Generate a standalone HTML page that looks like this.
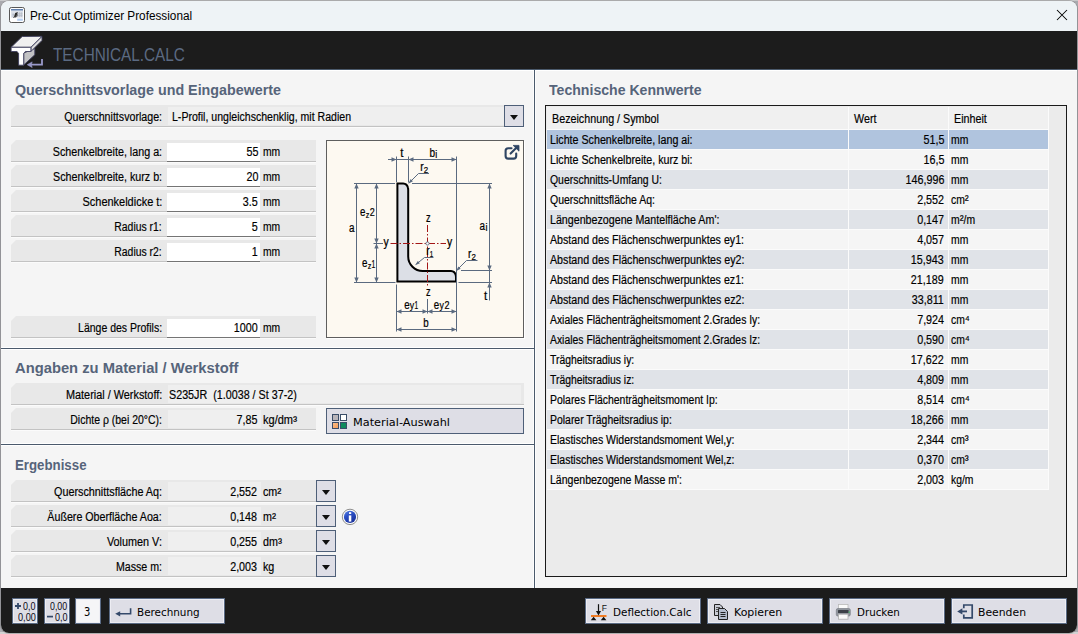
<!DOCTYPE html>
<html lang="de"><head><meta charset="utf-8"><title>Pre-Cut Optimizer Professional</title>
<style>
html,body{margin:0;padding:0}
body{width:1078px;height:634px;position:relative;overflow:hidden;background:#e9e9e9;font-family:"Liberation Sans",sans-serif;}
#bg{position:absolute;left:0;top:0;width:1078px;height:634px;background:linear-gradient(#c9c9cb 0,#c9c9cb 1px,#aaaaaf 1px,#aaaaaf 632px,#d2d2d2 632px);}
#win{position:absolute;left:1px;top:1px;width:1076px;height:632px;border-radius:8px;overflow:hidden;background:#f5f5f5;box-shadow:0 0 0 1px rgba(90,90,90,0.28);}
#titlebar{position:absolute;left:0;top:0;width:1076px;height:30px;background:#eef3f6;}
#band{position:absolute;left:0;top:30px;width:1076px;height:38px;background:#1c1c1c;}
#content{position:absolute;left:0;top:68px;width:1076px;height:519px;background:#f5f5f5;}
#bottom{position:absolute;left:0;top:587px;width:1076px;height:45px;background:#1c1c1c;}
.t,.ti,.tc,.h,.b{position:absolute;white-space:pre;line-height:14px;font-size:12px;color:#000;}
.t{-webkit-text-stroke:0.18px #000;}
.ti{color:#000;line-height:16px}
.tc{font-size:17.5px;line-height:20px;color:#5b6a82;}
.h{font-size:14.5px;font-weight:bold;line-height:18px;color:#56647a;}
.b{font-family:"DejaVu Sans","Liberation Sans",sans-serif;font-size:11px;line-height:14px;color:#000;}
.su{font-size:13.5px;position:relative;top:0.5px;line-height:0;}
.row{position:absolute;height:21px;background:#e8e8e8;clip-path:polygon(5px 0,100% 0,100% 100%,0 100%,0 5px);}
.dd{position:absolute;border:1px solid #4e5f78;background:#dedee6;}
.dd i{position:absolute;left:50%;top:50%;margin-left:-4.3px;margin-top:-1.2px;border-left:4.8px solid transparent;border-right:4.8px solid transparent;border-top:5.2px solid #111;width:0;height:0;}
.btn{position:absolute;border:1px solid #4e5f78;background:#dedee6;}
.bb{position:absolute;border:1px solid #5a6a84;background:#dedee6;box-shadow:inset 0 0 0 1px #ededf3;}
.d{position:absolute;white-space:pre;font-size:10.5px;line-height:12px;color:#0a0a14;}
#tbl{position:absolute;left:545px;top:105px;width:520px;height:470px;border:1px solid #1a1a1a;background:#ebebeb;}
</style></head>
<body>
<div id="bg"></div>
<div id="win">
<div id="titlebar"></div>
<div id="band"></div>
<div id="content"></div>
<div id="bottom"></div>
</div>
<svg style="position:absolute;left:9px;top:7px" width="16" height="16" viewBox="0 0 16 16">
<rect x="0.5" y="0.5" width="15" height="15" rx="1.8" fill="#ffffff" stroke="#585858"/>
<rect x="2" y="2" width="12" height="1.7" fill="#5f7fae"/>
<rect x="2" y="3.7" width="12" height="7" fill="#dde2ea"/>
<path d="M8.6 5.2V10M10.6 5.2V10M12.4 5.2V10M8 6.8H13.6M8 8.6H13.6" stroke="#b4bac6" stroke-width="0.7" fill="none"/>
<path d="M3.4 7.2H5.2M3.4 9H5" stroke="#9aa2b2" stroke-width="0.8"/>
<path d="M5 9.8L6.2 6L8.8 5L7 10.4Z" fill="#2a2a2a"/>
<path d="M4.2 10.6L7.8 9.2L8.6 7.4" stroke="#444" stroke-width="0.8" fill="none"/>
<rect x="8.2" y="11.6" width="5.6" height="2.2" fill="#a8c6ee" opacity="0.85"/>
</svg>
<span class="ti" style="top:8px;left:30px;transform-origin:0 0;transform:scaleX(0.98);">Pre-Cut Optimizer Professional</span>
<svg style="position:absolute;left:1056px;top:9px" width="12" height="12" viewBox="0 0 12 12"><path d="M1 1 L11 11 M11 1 L1 11" stroke="#000" stroke-width="1.05" fill="none"/></svg>
<svg style="position:absolute;left:6px;top:32px" width="44" height="38" viewBox="6 32 44 38">
<g stroke="#3d3d5c" stroke-width="0.9" stroke-linejoin="round">
<path d="M23.7 53L34.8 48.5V54.8L23.7 65Z" fill="#c2c2c4"/>
<path d="M30.9 47.3L42 36.3V40.4L30.9 51.5Z" fill="#dcdcdc"/>
<path d="M11.1 47.3L22.2 36.5L42 36.3L30.9 47.3Z" fill="#f0f0f0"/>
<path d="M11.1 47.3H30.9V51.5H25.4L23.7 53.2V65.2H18.6V53.2L16.9 51.5H11.1Z" fill="#ffffff"/>
</g>
<path d="M42 59V64.7H31" stroke="#9a9aca" stroke-width="1.8" fill="none"/>
<path d="M27.2 64.7L32.2 61.9L31.2 64.7L32.2 67.5Z" fill="#9a9aca" stroke="#9a9aca" stroke-width="0.6" stroke-linejoin="round"/>
</svg>
<span class="tc" style="top:45px;left:53px;transform-origin:0 0;transform:scaleX(0.875);">TECHNICAL.CALC</span>
<div style="position:absolute;left:1px;top:69px;width:1076px;height:1px;background:#4b5a6c;"></div>
<div style="position:absolute;left:1px;top:70px;width:1076px;height:1px;background:#ffffff;"></div>
<div style="position:absolute;left:533px;top:71px;width:1px;height:517px;background:#fdfdfd;"></div>
<div style="position:absolute;left:534px;top:70px;width:1px;height:518px;background:#4b5a6c;"></div>
<div style="position:absolute;left:535px;top:71px;width:1px;height:517px;background:#fdfdfd;"></div>
<div style="position:absolute;left:1px;top:347px;width:533px;height:1px;background:#ffffff;"></div>
<div style="position:absolute;left:1px;top:348px;width:534px;height:1px;background:#4b5a6c;"></div>
<div style="position:absolute;left:1px;top:349px;width:533px;height:1px;background:#ffffff;"></div>
<div style="position:absolute;left:1px;top:443px;width:533px;height:1px;background:#ffffff;"></div>
<div style="position:absolute;left:1px;top:444px;width:534px;height:1px;background:#4b5a6c;"></div>
<div style="position:absolute;left:1px;top:445px;width:533px;height:1px;background:#ffffff;"></div>
<span class="h" style="top:81.4px;left:15px;transform-origin:0 0;transform:scaleX(0.9855);">Querschnittsvorlage und Eingabewerte</span>
<div class="row" style="left:11px;top:105px;width:513px;"></div>
<div style="position:absolute;left:11px;top:126px;width:513px;height:1px;background:#c3c3c3;"></div>
<div style="position:absolute;left:11px;top:127px;width:513px;height:1px;background:#fbfbfb;"></div>
<span class="t" style="top:110.4px;right:915.9px;transform-origin:100% 0;transform:scaleX(0.8881);">Querschnittsvorlage:</span>
<div style="position:absolute;left:168px;top:107px;width:336px;height:18px;background:#efefef;"></div>
<span class="t" style="top:110px;left:172px;transform-origin:0 0;transform:scaleX(0.8799);">L-Profil, ungleichschenklig, mit Radien</span>
<div class="dd" style="left:504px;top:105px;width:18px;height:20px;"><i></i></div>
<div class="row" style="left:11px;top:140px;width:305px;"></div>
<div style="position:absolute;left:11px;top:161px;width:305px;height:1px;background:#c3c3c3;"></div>
<div style="position:absolute;left:11px;top:162px;width:305px;height:1px;background:#fbfbfb;"></div>
<span class="t" style="top:145.4px;right:915.9px;transform-origin:100% 0;transform:scaleX(0.8948);">Schenkelbreite, lang a:</span>
<div style="position:absolute;left:167px;top:143px;width:93px;height:18px;background:#ffffff;"></div>
<div style="position:absolute;left:167px;top:161px;width:93px;height:1px;background:#747474;"></div>
<span class="t" style="top:145.4px;right:820px;transform-origin:100% 0;transform:scaleX(0.895);">55</span>
<span class="t" style="top:145.4px;left:263px;transform-origin:0 0;transform:scaleX(0.86);">mm</span>
<div class="row" style="left:11px;top:165px;width:305px;"></div>
<div style="position:absolute;left:11px;top:186px;width:305px;height:1px;background:#c3c3c3;"></div>
<div style="position:absolute;left:11px;top:187px;width:305px;height:1px;background:#fbfbfb;"></div>
<span class="t" style="top:170.4px;right:915.9px;transform-origin:100% 0;transform:scaleX(0.8930);">Schenkelbreite, kurz b:</span>
<div style="position:absolute;left:167px;top:168px;width:93px;height:18px;background:#ffffff;"></div>
<div style="position:absolute;left:167px;top:186px;width:93px;height:1px;background:#747474;"></div>
<span class="t" style="top:170.4px;right:820px;transform-origin:100% 0;transform:scaleX(0.895);">20</span>
<span class="t" style="top:170.4px;left:263px;transform-origin:0 0;transform:scaleX(0.86);">mm</span>
<div class="row" style="left:11px;top:190px;width:305px;"></div>
<div style="position:absolute;left:11px;top:211px;width:305px;height:1px;background:#c3c3c3;"></div>
<div style="position:absolute;left:11px;top:212px;width:305px;height:1px;background:#fbfbfb;"></div>
<span class="t" style="top:195.4px;right:915.9px;transform-origin:100% 0;transform:scaleX(0.9143);">Schenkeldicke t:</span>
<div style="position:absolute;left:167px;top:193px;width:93px;height:18px;background:#ffffff;"></div>
<div style="position:absolute;left:167px;top:211px;width:93px;height:1px;background:#747474;"></div>
<span class="t" style="top:195.4px;right:820px;transform-origin:100% 0;transform:scaleX(0.895);">3.5</span>
<span class="t" style="top:195.4px;left:263px;transform-origin:0 0;transform:scaleX(0.86);">mm</span>
<div class="row" style="left:11px;top:215px;width:305px;"></div>
<div style="position:absolute;left:11px;top:236px;width:305px;height:1px;background:#c3c3c3;"></div>
<div style="position:absolute;left:11px;top:237px;width:305px;height:1px;background:#fbfbfb;"></div>
<span class="t" style="top:220.4px;right:915.9px;transform-origin:100% 0;transform:scaleX(0.8665);">Radius r1:</span>
<div style="position:absolute;left:167px;top:218px;width:93px;height:18px;background:#ffffff;"></div>
<div style="position:absolute;left:167px;top:236px;width:93px;height:1px;background:#747474;"></div>
<span class="t" style="top:220.4px;right:820px;transform-origin:100% 0;transform:scaleX(0.895);">5</span>
<span class="t" style="top:220.4px;left:263px;transform-origin:0 0;transform:scaleX(0.86);">mm</span>
<div class="row" style="left:11px;top:240px;width:305px;"></div>
<div style="position:absolute;left:11px;top:261px;width:305px;height:1px;background:#c3c3c3;"></div>
<div style="position:absolute;left:11px;top:262px;width:305px;height:1px;background:#fbfbfb;"></div>
<span class="t" style="top:245.4px;right:915.9px;transform-origin:100% 0;transform:scaleX(0.8665);">Radius r2:</span>
<div style="position:absolute;left:167px;top:243px;width:93px;height:18px;background:#ffffff;"></div>
<div style="position:absolute;left:167px;top:261px;width:93px;height:1px;background:#747474;"></div>
<span class="t" style="top:245.4px;right:820px;transform-origin:100% 0;transform:scaleX(0.895);">1</span>
<span class="t" style="top:245.4px;left:263px;transform-origin:0 0;transform:scaleX(0.86);">mm</span>
<div class="row" style="left:11px;top:316px;width:305px;"></div>
<div style="position:absolute;left:11px;top:337px;width:305px;height:1px;background:#c3c3c3;"></div>
<div style="position:absolute;left:11px;top:338px;width:305px;height:1px;background:#fbfbfb;"></div>
<span class="t" style="top:321.4px;right:915.9px;transform-origin:100% 0;transform:scaleX(0.8744);">Länge des Profils:</span>
<div style="position:absolute;left:167px;top:319px;width:93px;height:18px;background:#ffffff;"></div>
<div style="position:absolute;left:167px;top:337px;width:93px;height:1px;background:#747474;"></div>
<span class="t" style="top:321.4px;right:820px;transform-origin:100% 0;transform:scaleX(0.895);">1000</span>
<span class="t" style="top:321.4px;left:263px;transform-origin:0 0;transform:scaleX(0.86);">mm</span>
<svg id="dg" style="position:absolute;left:326px;top:140px" width="199" height="199" viewBox="326 140 199 199">
<rect x="326.5" y="140.5" width="197" height="197" fill="#fdf9f1" stroke="#5e5e5e" stroke-width="1"/>
<path d="M524.5 141V338.5M327 338.5H525" stroke="#ffffff" stroke-width="1" fill="none"/>
<path d="M397.4 183.6 H403.2 Q407.0 183.79999999999998 407.9 187.6 Q408.2 188.6 408.2 190.1 V256.5 A14.5 14.5 0 0 0 422.7 271.0 H451.0 Q454.8 271.2 455.7 275.0 Q456.0 276.0 456.0 277.5 V281.4 H397.4 Z" fill="#dcdfe6" stroke="#000" stroke-width="2" stroke-linejoin="miter"/>
<path d="M388 159.5L456.4 159.5M396.5 156.5L396.5 182M408.5 156.5L408.5 182.5M456.5 156.5L456.5 331.5M354 183.5L395 183.5M412 183.5L492 183.5M354 282.5L395.5 282.5M458.5 282.5L492 282.5M461 270.5L492 270.5M356.5 183.5L356.5 282.5M376.5 183.5L376.5 282.5M373.5 243.5L383 243.5M489.5 183.5L489.5 300.5M396.5 284.5L396.5 331.5M427.5 299L427.5 313.5M396.5 311.5L456.5 311.5M396.5 329.5L456.5 329.5M418.5 173.5L429 173.5M418.5 173.5L409.5 182.5M424.5 257.5L433.5 257.5M424.5 257.5L416.5 264M466.5 260.5L477.5 260.5M466.5 260.5L457.5 269.5" stroke="#5a6a80" stroke-width="1" fill="none"/>
<path d="M396.5 159.5L391.50 161.70L391.50 157.30ZM408.5 159.5L413.50 157.30L413.50 161.70ZM456.5 159.5L451.50 161.70L451.50 157.30ZM356.5 183.5L358.70 188.50L354.30 188.50ZM356.5 282.5L354.30 277.50L358.70 277.50ZM376.5 183.5L378.70 188.50L374.30 188.50ZM376.5 243.5L374.30 238.50L378.70 238.50ZM376.5 243.5L378.70 248.50L374.30 248.50ZM376.5 282.5L374.30 277.50L378.70 277.50ZM489.5 183.5L491.70 188.50L487.30 188.50ZM489.5 270.5L487.30 265.50L491.70 265.50ZM489.5 282.5L491.70 287.50L487.30 287.50ZM396.5 311.5L401.50 309.30L401.50 313.70ZM427.5 311.5L422.50 313.70L422.50 309.30ZM427.5 311.5L432.50 309.30L432.50 313.70ZM456.5 311.5L451.50 313.70L451.50 309.30ZM396.5 329.5L401.50 327.30L401.50 331.70ZM456.5 329.5L451.50 331.70L451.50 327.30ZM408.3 183.8L410.68 179.12L412.96 181.37ZM415.0 265.3L417.85 260.89L419.88 263.36ZM456.0 271.2L458.36 266.51L460.64 268.75Z" fill="#5a6a80"/>
<path d="M390.5 243.5H446M427.5 225V287.5" stroke="#a31616" stroke-width="1" stroke-dasharray="7 2 1.5 2" fill="none"/>
<circle cx="427.5" cy="243.5" r="1.6" fill="#fff" stroke="#5a6a80" stroke-width="0.9"/>
<g font-family="Liberation Sans, sans-serif" fill="#000" stroke="#000" stroke-width="0.22">
<text x="400.2" y="156.5" font-size="12" textLength="3.2" lengthAdjust="spacingAndGlyphs" text-anchor="start">t</text>
<text x="429.5" y="156.5" font-size="12" textLength="5.6" lengthAdjust="spacingAndGlyphs" text-anchor="start">b</text>
<text x="435.3" y="158.2" font-size="10.5" textLength="2.0" lengthAdjust="spacingAndGlyphs" text-anchor="start">i</text>
<text x="420.2" y="171" font-size="12" textLength="3.4" lengthAdjust="spacingAndGlyphs" text-anchor="start">r</text>
<text x="423.8" y="172.5" font-size="9" textLength="4.4" lengthAdjust="spacingAndGlyphs" text-anchor="start">2</text>
<text x="360" y="215.5" font-size="12" textLength="5.4" lengthAdjust="spacingAndGlyphs" text-anchor="start">e</text>
<text x="365.8" y="217.5" font-size="9" textLength="3.6" lengthAdjust="spacingAndGlyphs" text-anchor="start">z</text>
<text x="369.8" y="216.4" font-size="11.5" textLength="5.0" lengthAdjust="spacingAndGlyphs" text-anchor="start">2</text>
<text x="349" y="232.3" font-size="12" textLength="5.5" lengthAdjust="spacingAndGlyphs" text-anchor="start">a</text>
<text x="426" y="222.3" font-size="12" textLength="4.6" lengthAdjust="spacingAndGlyphs" text-anchor="start">z</text>
<text x="479.6" y="229.6" font-size="12" textLength="5.5" lengthAdjust="spacingAndGlyphs" text-anchor="start">a</text>
<text x="485.4" y="231.4" font-size="10.5" textLength="2.0" lengthAdjust="spacingAndGlyphs" text-anchor="start">i</text>
<text x="383.6" y="246" font-size="12" textLength="5.2" lengthAdjust="spacingAndGlyphs" text-anchor="start">y</text>
<text x="447" y="246" font-size="12" textLength="5.2" lengthAdjust="spacingAndGlyphs" text-anchor="start">y</text>
<text x="426.3" y="255" font-size="12" textLength="3.4" lengthAdjust="spacingAndGlyphs" text-anchor="start">r</text>
<text x="429.8" y="256.5" font-size="9" textLength="3.4" lengthAdjust="spacingAndGlyphs" text-anchor="start">1</text>
<text x="468" y="258.2" font-size="12" textLength="3.4" lengthAdjust="spacingAndGlyphs" text-anchor="start">r</text>
<text x="471.6" y="259.7" font-size="9" textLength="4.4" lengthAdjust="spacingAndGlyphs" text-anchor="start">2</text>
<text x="362" y="266.8" font-size="12" textLength="5.4" lengthAdjust="spacingAndGlyphs" text-anchor="start">e</text>
<text x="367.8" y="268.8" font-size="9" textLength="3.6" lengthAdjust="spacingAndGlyphs" text-anchor="start">z</text>
<text x="371.4" y="267.6" font-size="11.5" textLength="3.8" lengthAdjust="spacingAndGlyphs" text-anchor="start">1</text>
<text x="426" y="296" font-size="12" textLength="4.6" lengthAdjust="spacingAndGlyphs" text-anchor="start">z</text>
<text x="484" y="300" font-size="12" textLength="3.2" lengthAdjust="spacingAndGlyphs" text-anchor="start">t</text>
<text x="404.2" y="308.6" font-size="12" textLength="5.4" lengthAdjust="spacingAndGlyphs" text-anchor="start">e</text>
<text x="409.8" y="308.6" font-size="10.5" textLength="4.4" lengthAdjust="spacingAndGlyphs" text-anchor="start">y</text>
<text x="414.6" y="308.6" font-size="10.5" textLength="3.6" lengthAdjust="spacingAndGlyphs" text-anchor="start">1</text>
<text x="433.8" y="308.6" font-size="12" textLength="5.4" lengthAdjust="spacingAndGlyphs" text-anchor="start">e</text>
<text x="439.4" y="308.6" font-size="10.5" textLength="4.4" lengthAdjust="spacingAndGlyphs" text-anchor="start">y</text>
<text x="444.4" y="308.6" font-size="10.5" textLength="5.0" lengthAdjust="spacingAndGlyphs" text-anchor="start">2</text>
<text x="423.3" y="326.5" font-size="12" textLength="5.4" lengthAdjust="spacingAndGlyphs" text-anchor="start">b</text>
</g>
<g fill="none" stroke="#2f4563" stroke-width="2.1" stroke-linecap="round" stroke-linejoin="round">
<path d="M511.5 148.2H508.2Q505.6 148.2 505.6 150.8V156Q505.6 158.6 508.2 158.6H513.6Q516.2 158.6 516.2 156V153.6"/>
<path d="M510.6 153.6L517.4 146.8"/>
</g>
<path d="M513.2 145.4H519V151.2Z" fill="#2f4563" stroke="#2f4563" stroke-width="0.8" stroke-linejoin="round"/>
</svg>
<span class="h" style="top:358.9px;left:15px;transform-origin:0 0;transform:scaleX(1.0174);">Angaben zu Material / Werkstoff</span>
<div class="row" style="left:11px;top:383px;width:513px;"></div>
<div style="position:absolute;left:11px;top:404px;width:513px;height:1px;background:#c3c3c3;"></div>
<div style="position:absolute;left:11px;top:405px;width:513px;height:1px;background:#fbfbfb;"></div>
<span class="t" style="top:388.4px;right:915.9px;transform-origin:100% 0;transform:scaleX(0.9062);">Material / Werkstoff:</span>
<div style="position:absolute;left:168px;top:385px;width:353px;height:18px;background:#efefef;"></div>
<span class="t" style="top:388px;left:169px;transform-origin:0 0;transform:scaleX(0.895);">S235JR  (1.0038 / St 37-2)</span>
<div class="row" style="left:11px;top:408px;width:305px;"></div>
<div style="position:absolute;left:11px;top:429px;width:305px;height:1px;background:#c3c3c3;"></div>
<div style="position:absolute;left:11px;top:430px;width:305px;height:1px;background:#fbfbfb;"></div>
<span class="t" style="top:413.4px;right:915.9px;transform-origin:100% 0;transform:scaleX(0.8738);">Dichte ρ (bei 20°C):</span>
<div style="position:absolute;left:168px;top:410px;width:93px;height:18px;background:#efefef;"></div>
<span class="t" style="top:413px;right:821px;transform-origin:100% 0;transform:scaleX(0.895);">7,85</span>
<span class="t" style="top:413px;left:263px;transform-origin:0 0;transform:scaleX(0.92);">kg/dm<span class="su">³</span></span>
<div class="btn" style="left:326px;top:408px;width:196px;height:24px;"></div>
<svg style="position:absolute;left:332px;top:414px" width="15" height="15" viewBox="0 0 15 15">
<defs><linearGradient id="og" x1="0" y1="0" x2="1" y2="1"><stop offset="0" stop-color="#ffc08a"/><stop offset="1" stop-color="#f09a58"/></linearGradient></defs>
<rect x="0.5" y="0.5" width="6" height="6" fill="#b9b5ba" stroke="#3a4d68"/>
<rect x="8.5" y="0.5" width="6" height="6" fill="#ffffff" stroke="#3a4d68"/>
<rect x="0.5" y="8.5" width="6" height="6" fill="url(#og)" stroke="#3a4d68"/>
<rect x="8.5" y="8.5" width="6" height="6" fill="#0e8a5c" stroke="#3a4d68"/>
</svg>
<span class="b" style="top:415.6px;left:353px;transform-origin:0 0;transform:scaleX(1.0273);">Material-Auswahl</span>
<span class="h" style="top:455.9px;left:15px;transform-origin:0 0;transform:scaleX(0.9147);">Ergebnisse</span>
<div class="row" style="left:11px;top:480px;width:305px;"></div>
<div style="position:absolute;left:11px;top:501px;width:305px;height:1px;background:#c3c3c3;"></div>
<div style="position:absolute;left:11px;top:502px;width:305px;height:1px;background:#fbfbfb;"></div>
<span class="t" style="top:485.4px;right:915.9px;transform-origin:100% 0;transform:scaleX(0.8994);">Querschnittsfläche Aq:</span>
<div style="position:absolute;left:168px;top:482px;width:93px;height:18px;background:#efefef;"></div>
<span class="t" style="top:485.4px;right:821px;transform-origin:100% 0;transform:scaleX(0.895);">2,552</span>
<span class="t" style="top:485.4px;left:263px;transform-origin:0 0;transform:scaleX(0.895);">cm<span class="su">²</span></span>
<div class="dd" style="left:316px;top:480px;width:18px;height:20px;"><i></i></div>
<div class="row" style="left:11px;top:505px;width:305px;"></div>
<div style="position:absolute;left:11px;top:526px;width:305px;height:1px;background:#c3c3c3;"></div>
<div style="position:absolute;left:11px;top:527px;width:305px;height:1px;background:#fbfbfb;"></div>
<span class="t" style="top:510.4px;right:915.9px;transform-origin:100% 0;transform:scaleX(0.8885);">Äußere Oberfläche Aoa:</span>
<div style="position:absolute;left:168px;top:507px;width:93px;height:18px;background:#efefef;"></div>
<span class="t" style="top:510.4px;right:821px;transform-origin:100% 0;transform:scaleX(0.895);">0,148</span>
<span class="t" style="top:510.4px;left:263px;transform-origin:0 0;transform:scaleX(0.895);">m<span class="su">²</span></span>
<div class="dd" style="left:316px;top:505px;width:18px;height:20px;"><i></i></div>
<div class="row" style="left:11px;top:530px;width:305px;"></div>
<div style="position:absolute;left:11px;top:551px;width:305px;height:1px;background:#c3c3c3;"></div>
<div style="position:absolute;left:11px;top:552px;width:305px;height:1px;background:#fbfbfb;"></div>
<span class="t" style="top:535.4px;right:915.9px;transform-origin:100% 0;transform:scaleX(0.9026);">Volumen V:</span>
<div style="position:absolute;left:168px;top:532px;width:93px;height:18px;background:#efefef;"></div>
<span class="t" style="top:535.4px;right:821px;transform-origin:100% 0;transform:scaleX(0.895);">0,255</span>
<span class="t" style="top:535.4px;left:263px;transform-origin:0 0;transform:scaleX(0.895);">dm<span class="su">³</span></span>
<div class="dd" style="left:316px;top:530px;width:18px;height:20px;"><i></i></div>
<div class="row" style="left:11px;top:555px;width:305px;"></div>
<div style="position:absolute;left:11px;top:576px;width:305px;height:1px;background:#c3c3c3;"></div>
<div style="position:absolute;left:11px;top:577px;width:305px;height:1px;background:#fbfbfb;"></div>
<span class="t" style="top:560.4px;right:915.9px;transform-origin:100% 0;transform:scaleX(0.8843);">Masse m:</span>
<div style="position:absolute;left:168px;top:557px;width:93px;height:18px;background:#efefef;"></div>
<span class="t" style="top:560.4px;right:821px;transform-origin:100% 0;transform:scaleX(0.895);">2,003</span>
<span class="t" style="top:560.4px;left:263px;transform-origin:0 0;transform:scaleX(0.895);">kg</span>
<div class="dd" style="left:316px;top:555px;width:18px;height:20px;"><i></i></div>
<svg style="position:absolute;left:341px;top:508px" width="18" height="18" viewBox="341 508 18 18">
<defs><linearGradient id="ig" x1="0" y1="0" x2="0.6" y2="1"><stop offset="0" stop-color="#5b86ea"/><stop offset="0.45" stop-color="#2b4fc4"/><stop offset="1" stop-color="#1a329c"/></linearGradient></defs>
<circle cx="350" cy="516.9" r="7.7" fill="#fbfbfb" stroke="#8e8e8e" stroke-width="1"/>
<circle cx="350" cy="516.9" r="6.1" fill="url(#ig)"/>
<rect x="349" y="512.2" width="2.2" height="1.8" fill="#fff"/>
<rect x="348.8" y="515.4" width="2.5" height="6.2" fill="#fff"/>
</svg>
<span class="h" style="top:81.4px;left:549px;transform-origin:0 0;transform:scaleX(0.9722);">Technische Kennwerte</span>
<div id="tbl"></div>
<div style="position:absolute;left:547px;top:107px;width:502px;height:383px;background:#fbfbfb;"></div>
<div style="position:absolute;left:547px;top:107px;width:301px;height:22px;background:#f0f0f0;"></div>
<div style="position:absolute;left:849px;top:107px;width:99px;height:22px;background:#f0f0f0;"></div>
<div style="position:absolute;left:949px;top:107px;width:99px;height:22px;background:#f0f0f0;"></div>
<span class="t" style="top:112px;left:552px;transform-origin:0 0;transform:scaleX(0.895);">Bezeichnung / Symbol</span>
<span class="t" style="top:112px;left:854px;transform-origin:0 0;transform:scaleX(0.895);">Wert</span>
<span class="t" style="top:112px;left:954px;transform-origin:0 0;transform:scaleX(0.895);">Einheit</span>
<div style="position:absolute;left:547px;top:130px;width:301px;height:19px;background:#b0c4de;"></div>
<div style="position:absolute;left:849px;top:130px;width:99px;height:19px;background:#b0c4de;"></div>
<div style="position:absolute;left:949px;top:130px;width:99px;height:19px;background:#b0c4de;"></div>
<span class="t" style="top:132.5px;left:550px;transform-origin:0 0;transform:scaleX(0.8906);">Lichte Schenkelbreite, lang ai:</span>
<span class="t" style="top:132.5px;right:134px;transform-origin:100% 0;transform:scaleX(0.895);">51,5</span>
<span class="t" style="top:132.5px;left:951.4px;transform-origin:0 0;transform:scaleX(0.865);">mm</span>
<div style="position:absolute;left:547px;top:150px;width:301px;height:19px;background:#f5f5f5;"></div>
<div style="position:absolute;left:849px;top:150px;width:99px;height:19px;background:#f5f5f5;"></div>
<div style="position:absolute;left:949px;top:150px;width:99px;height:19px;background:#f5f5f5;"></div>
<span class="t" style="top:152.5px;left:550px;transform-origin:0 0;transform:scaleX(0.8907);">Lichte Schenkelbreite, kurz bi:</span>
<span class="t" style="top:152.5px;right:134px;transform-origin:100% 0;transform:scaleX(0.895);">16,5</span>
<span class="t" style="top:152.5px;left:951.4px;transform-origin:0 0;transform:scaleX(0.865);">mm</span>
<div style="position:absolute;left:547px;top:170px;width:301px;height:19px;background:#e0e3e8;"></div>
<div style="position:absolute;left:849px;top:170px;width:99px;height:19px;background:#e0e3e8;"></div>
<div style="position:absolute;left:949px;top:170px;width:99px;height:19px;background:#e0e3e8;"></div>
<span class="t" style="top:172.5px;left:550px;transform-origin:0 0;transform:scaleX(0.8701);">Querschnitts-Umfang U:</span>
<span class="t" style="top:172.5px;right:134px;transform-origin:100% 0;transform:scaleX(0.895);">146,996</span>
<span class="t" style="top:172.5px;left:951.4px;transform-origin:0 0;transform:scaleX(0.865);">mm</span>
<div style="position:absolute;left:547px;top:190px;width:301px;height:19px;background:#f5f5f5;"></div>
<div style="position:absolute;left:849px;top:190px;width:99px;height:19px;background:#f5f5f5;"></div>
<div style="position:absolute;left:949px;top:190px;width:99px;height:19px;background:#f5f5f5;"></div>
<span class="t" style="top:192.5px;left:550px;transform-origin:0 0;transform:scaleX(0.8744);">Querschnittsfläche Aq:</span>
<span class="t" style="top:192.5px;right:134px;transform-origin:100% 0;transform:scaleX(0.895);">2,552</span>
<span class="t" style="top:192.5px;left:951.4px;transform-origin:0 0;transform:scaleX(0.865);">cm<span class="su">²</span></span>
<div style="position:absolute;left:547px;top:210px;width:301px;height:19px;background:#e0e3e8;"></div>
<div style="position:absolute;left:849px;top:210px;width:99px;height:19px;background:#e0e3e8;"></div>
<div style="position:absolute;left:949px;top:210px;width:99px;height:19px;background:#e0e3e8;"></div>
<span class="t" style="top:212.5px;left:550px;transform-origin:0 0;transform:scaleX(0.8895);">Längenbezogene Mantelfläche Am&#x27;:</span>
<span class="t" style="top:212.5px;right:134px;transform-origin:100% 0;transform:scaleX(0.895);">0,147</span>
<span class="t" style="top:212.5px;left:951.4px;transform-origin:0 0;transform:scaleX(0.865);">m<span class="su">²</span>/m</span>
<div style="position:absolute;left:547px;top:230px;width:301px;height:19px;background:#f5f5f5;"></div>
<div style="position:absolute;left:849px;top:230px;width:99px;height:19px;background:#f5f5f5;"></div>
<div style="position:absolute;left:949px;top:230px;width:99px;height:19px;background:#f5f5f5;"></div>
<span class="t" style="top:232.5px;left:550px;transform-origin:0 0;transform:scaleX(0.8867);">Abstand des Flächenschwerpunktes ey1:</span>
<span class="t" style="top:232.5px;right:134px;transform-origin:100% 0;transform:scaleX(0.895);">4,057</span>
<span class="t" style="top:232.5px;left:951.4px;transform-origin:0 0;transform:scaleX(0.865);">mm</span>
<div style="position:absolute;left:547px;top:250px;width:301px;height:19px;background:#e0e3e8;"></div>
<div style="position:absolute;left:849px;top:250px;width:99px;height:19px;background:#e0e3e8;"></div>
<div style="position:absolute;left:949px;top:250px;width:99px;height:19px;background:#e0e3e8;"></div>
<span class="t" style="top:252.5px;left:550px;transform-origin:0 0;transform:scaleX(0.8890);">Abstand des Flächenschwerpunktes ey2:</span>
<span class="t" style="top:252.5px;right:134px;transform-origin:100% 0;transform:scaleX(0.895);">15,943</span>
<span class="t" style="top:252.5px;left:951.4px;transform-origin:0 0;transform:scaleX(0.865);">mm</span>
<div style="position:absolute;left:547px;top:270px;width:301px;height:19px;background:#f5f5f5;"></div>
<div style="position:absolute;left:849px;top:270px;width:99px;height:19px;background:#f5f5f5;"></div>
<div style="position:absolute;left:949px;top:270px;width:99px;height:19px;background:#f5f5f5;"></div>
<span class="t" style="top:272.5px;left:550px;transform-origin:0 0;transform:scaleX(0.8867);">Abstand des Flächenschwerpunktes ez1:</span>
<span class="t" style="top:272.5px;right:134px;transform-origin:100% 0;transform:scaleX(0.895);">21,189</span>
<span class="t" style="top:272.5px;left:951.4px;transform-origin:0 0;transform:scaleX(0.865);">mm</span>
<div style="position:absolute;left:547px;top:290px;width:301px;height:19px;background:#e0e3e8;"></div>
<div style="position:absolute;left:849px;top:290px;width:99px;height:19px;background:#e0e3e8;"></div>
<div style="position:absolute;left:949px;top:290px;width:99px;height:19px;background:#e0e3e8;"></div>
<span class="t" style="top:292.5px;left:550px;transform-origin:0 0;transform:scaleX(0.8885);">Abstand des Flächenschwerpunktes ez2:</span>
<span class="t" style="top:292.5px;right:134px;transform-origin:100% 0;transform:scaleX(0.895);">33,811</span>
<span class="t" style="top:292.5px;left:951.4px;transform-origin:0 0;transform:scaleX(0.865);">mm</span>
<div style="position:absolute;left:547px;top:310px;width:301px;height:19px;background:#f5f5f5;"></div>
<div style="position:absolute;left:849px;top:310px;width:99px;height:19px;background:#f5f5f5;"></div>
<div style="position:absolute;left:949px;top:310px;width:99px;height:19px;background:#f5f5f5;"></div>
<span class="t" style="top:312.5px;left:550px;transform-origin:0 0;transform:scaleX(0.8658);">Axiales Flächenträgheitsmoment 2.Grades Iy:</span>
<span class="t" style="top:312.5px;right:134px;transform-origin:100% 0;transform:scaleX(0.895);">7,924</span>
<span class="t" style="top:312.5px;left:951.4px;transform-origin:0 0;transform:scaleX(0.865);">cm<span class="su">⁴</span></span>
<div style="position:absolute;left:547px;top:330px;width:301px;height:19px;background:#e0e3e8;"></div>
<div style="position:absolute;left:849px;top:330px;width:99px;height:19px;background:#e0e3e8;"></div>
<div style="position:absolute;left:949px;top:330px;width:99px;height:19px;background:#e0e3e8;"></div>
<span class="t" style="top:332.5px;left:550px;transform-origin:0 0;transform:scaleX(0.8658);">Axiales Flächenträgheitsmoment 2.Grades Iz:</span>
<span class="t" style="top:332.5px;right:134px;transform-origin:100% 0;transform:scaleX(0.895);">0,590</span>
<span class="t" style="top:332.5px;left:951.4px;transform-origin:0 0;transform:scaleX(0.865);">cm<span class="su">⁴</span></span>
<div style="position:absolute;left:547px;top:350px;width:301px;height:19px;background:#f5f5f5;"></div>
<div style="position:absolute;left:849px;top:350px;width:99px;height:19px;background:#f5f5f5;"></div>
<div style="position:absolute;left:949px;top:350px;width:99px;height:19px;background:#f5f5f5;"></div>
<span class="t" style="top:352.5px;left:550px;transform-origin:0 0;transform:scaleX(0.8628);">Trägheitsradius iy:</span>
<span class="t" style="top:352.5px;right:134px;transform-origin:100% 0;transform:scaleX(0.895);">17,622</span>
<span class="t" style="top:352.5px;left:951.4px;transform-origin:0 0;transform:scaleX(0.865);">mm</span>
<div style="position:absolute;left:547px;top:370px;width:301px;height:19px;background:#e0e3e8;"></div>
<div style="position:absolute;left:849px;top:370px;width:99px;height:19px;background:#e0e3e8;"></div>
<div style="position:absolute;left:949px;top:370px;width:99px;height:19px;background:#e0e3e8;"></div>
<span class="t" style="top:372.5px;left:550px;transform-origin:0 0;transform:scaleX(0.8628);">Trägheitsradius iz:</span>
<span class="t" style="top:372.5px;right:134px;transform-origin:100% 0;transform:scaleX(0.895);">4,809</span>
<span class="t" style="top:372.5px;left:951.4px;transform-origin:0 0;transform:scaleX(0.865);">mm</span>
<div style="position:absolute;left:547px;top:390px;width:301px;height:19px;background:#f5f5f5;"></div>
<div style="position:absolute;left:849px;top:390px;width:99px;height:19px;background:#f5f5f5;"></div>
<div style="position:absolute;left:949px;top:390px;width:99px;height:19px;background:#f5f5f5;"></div>
<span class="t" style="top:392.5px;left:550px;transform-origin:0 0;transform:scaleX(0.8694);">Polares Flächenträgheitsmoment Ip:</span>
<span class="t" style="top:392.5px;right:134px;transform-origin:100% 0;transform:scaleX(0.895);">8,514</span>
<span class="t" style="top:392.5px;left:951.4px;transform-origin:0 0;transform:scaleX(0.865);">cm<span class="su">⁴</span></span>
<div style="position:absolute;left:547px;top:410px;width:301px;height:19px;background:#e0e3e8;"></div>
<div style="position:absolute;left:849px;top:410px;width:99px;height:19px;background:#e0e3e8;"></div>
<div style="position:absolute;left:949px;top:410px;width:99px;height:19px;background:#e0e3e8;"></div>
<span class="t" style="top:412.5px;left:550px;transform-origin:0 0;transform:scaleX(0.8695);">Polarer Trägheitsradius ip:</span>
<span class="t" style="top:412.5px;right:134px;transform-origin:100% 0;transform:scaleX(0.895);">18,266</span>
<span class="t" style="top:412.5px;left:951.4px;transform-origin:0 0;transform:scaleX(0.865);">mm</span>
<div style="position:absolute;left:547px;top:430px;width:301px;height:19px;background:#f5f5f5;"></div>
<div style="position:absolute;left:849px;top:430px;width:99px;height:19px;background:#f5f5f5;"></div>
<div style="position:absolute;left:949px;top:430px;width:99px;height:19px;background:#f5f5f5;"></div>
<span class="t" style="top:432.5px;left:550px;transform-origin:0 0;transform:scaleX(0.8759);">Elastisches Widerstandsmoment Wel,y:</span>
<span class="t" style="top:432.5px;right:134px;transform-origin:100% 0;transform:scaleX(0.895);">2,344</span>
<span class="t" style="top:432.5px;left:951.4px;transform-origin:0 0;transform:scaleX(0.865);">cm<span class="su">³</span></span>
<div style="position:absolute;left:547px;top:450px;width:301px;height:19px;background:#e0e3e8;"></div>
<div style="position:absolute;left:849px;top:450px;width:99px;height:19px;background:#e0e3e8;"></div>
<div style="position:absolute;left:949px;top:450px;width:99px;height:19px;background:#e0e3e8;"></div>
<span class="t" style="top:452.5px;left:550px;transform-origin:0 0;transform:scaleX(0.8759);">Elastisches Widerstandsmoment Wel,z:</span>
<span class="t" style="top:452.5px;right:134px;transform-origin:100% 0;transform:scaleX(0.895);">0,370</span>
<span class="t" style="top:452.5px;left:951.4px;transform-origin:0 0;transform:scaleX(0.865);">cm<span class="su">³</span></span>
<div style="position:absolute;left:547px;top:470px;width:301px;height:19px;background:#f5f5f5;"></div>
<div style="position:absolute;left:849px;top:470px;width:99px;height:19px;background:#f5f5f5;"></div>
<div style="position:absolute;left:949px;top:470px;width:99px;height:19px;background:#f5f5f5;"></div>
<span class="t" style="top:472.5px;left:550px;transform-origin:0 0;transform:scaleX(0.8776);">Längenbezogene Masse m&#x27;:</span>
<span class="t" style="top:472.5px;right:134px;transform-origin:100% 0;transform:scaleX(0.895);">2,003</span>
<span class="t" style="top:472.5px;left:951.4px;transform-origin:0 0;transform:scaleX(0.865);">kg/m</span>
<div class="bb" style="left:12px;top:598px;width:24px;height:24px;"></div>
<div class="bb" style="left:44px;top:598px;width:24px;height:24px;"></div>
<div class="bb" style="left:75px;top:598px;width:24px;height:24px;background:#f5f5f7;"></div>
<span class="d" style="top:600.2px;left:23.3px;transform-origin:0 0;transform:scaleX(0.8556);">0,0</span>
<span class="d" style="top:610.9px;left:18px;transform-origin:0 0;transform:scaleX(0.8709);">0,00</span>
<span class="d" style="top:600.2px;left:50.2px;transform-origin:0 0;transform:scaleX(0.8416);">0,00</span>
<span class="d" style="top:610.9px;left:54.8px;transform-origin:0 0;transform:scaleX(0.8625);">0,0</span>
<svg style="position:absolute;left:14px;top:602px" width="8" height="8" viewBox="0 0 8 8"><path d="M1 4H7M4 1V7" stroke="#34496a" stroke-width="1.8" fill="none"/></svg>
<svg style="position:absolute;left:46px;top:613px" width="8" height="8" viewBox="0 0 8 8"><path d="M1 3.6H7" stroke="#34496a" stroke-width="1.7" fill="none"/></svg>
<span class="b" style="top:604.6px;left:84.3px;transform-origin:0 0;transform:scaleX(0.8286);font-size:12px;">3</span>
<div class="bb" style="left:109px;top:598px;width:114px;height:24px;"></div>
<span class="b" style="top:606.2px;left:136.8px;transform-origin:0 0;transform:scaleX(0.9445);">Berechnung</span>
<svg style="position:absolute;left:114px;top:606px" width="19" height="13" viewBox="114 606 19 13"><path d="M130.6 608.2V613.8H119" stroke="#34496a" stroke-width="1.6" fill="none"/><path d="M115.2 613.8L120.2 611.2V616.4Z" fill="#34496a"/></svg>
<div class="bb" style="left:585px;top:598px;width:114px;height:24px;"></div>
<span class="b" style="top:606.2px;left:612.5px;transform-origin:0 0;transform:scaleX(0.9449);">Deflection.Calc</span>
<svg style="position:absolute;left:590px;top:603px" width="18" height="19" viewBox="590 603 18 19">
<path d="M591 616H606.5" stroke="#f07a22" stroke-width="2"/>
<path d="M598.5 604.2V612" stroke="#111" stroke-width="1.2"/><path d="M595.9 611L601.1 611L598.5 615.4Z" fill="#111"/>
<path d="M590.8 620.2L593.6 616.8L596.4 620.2ZM600.8 620.2L603.6 616.8L606.4 620.2Z" fill="#111"/>
<text x="601.8" y="611" font-family="Liberation Sans, sans-serif" font-size="8.5" fill="#111">F</text>
</svg>
<div class="bb" style="left:707px;top:598px;width:114px;height:24px;"></div>
<span class="b" style="top:606.2px;left:734.4px;transform-origin:0 0;transform:scaleX(0.9972);">Kopieren</span>
<svg style="position:absolute;left:713px;top:603px" width="17" height="18" viewBox="713 603 17 18">
<path d="M714.5 604.5H720L722.5 607V615.5H714.5Z" fill="#c9ccd6" stroke="#222" stroke-width="1"/>
<path d="M716 607.5H720M716 609.5H718M716 611.5H718" stroke="#444" stroke-width="0.9"/>
<path d="M718.5 608.5H724.5L727.5 611.5V619.5H718.5Z" fill="#b4bccc" stroke="#222" stroke-width="1"/>
<path d="M720.5 612.5H725.5M720.5 614.5H725.5M720.5 616.5H725.5" stroke="#222" stroke-width="1"/>
</svg>
<div class="bb" style="left:829px;top:598px;width:114px;height:24px;"></div>
<span class="b" style="top:606.2px;left:856.5px;transform-origin:0 0;transform:scaleX(0.9358);">Drucken</span>
<svg style="position:absolute;left:835px;top:603px" width="17" height="18" viewBox="835 603 17 18">
<rect x="838.5" y="604.5" width="9.5" height="5" fill="#fafafa" stroke="#b8b8b8" stroke-width="0.8"/>
<rect x="836.3" y="608.5" width="14" height="7.6" rx="1.6" fill="#8f949c" stroke="#7a7e86" stroke-width="0.7"/>
<rect x="838" y="610" width="10.6" height="3" rx="0.6" fill="#3c4048"/>
<rect x="838.5" y="614.2" width="9.5" height="5" fill="#fafafa" stroke="#b0b0b0" stroke-width="0.8"/>
<rect x="848.6" y="611.6" width="1.2" height="1.2" fill="#35c060"/>
</svg>
<div class="bb" style="left:951px;top:598px;width:114px;height:24px;"></div>
<span class="b" style="top:606.2px;left:978.4px;transform-origin:0 0;transform:scaleX(0.9840);">Beenden</span>
<svg style="position:absolute;left:956px;top:603px" width="18" height="17" viewBox="956 603 18 17">
<path d="M963.8 608.2V605H972.2V617.8H963.8V614.6" stroke="#34496a" stroke-width="1.7" fill="none"/>
<path d="M961.5 611.4H967" stroke="#34496a" stroke-width="1.8"/><path d="M957.2 611.4L962.4 608.2V614.6Z" fill="#34496a"/>
</svg>
</body></html>
